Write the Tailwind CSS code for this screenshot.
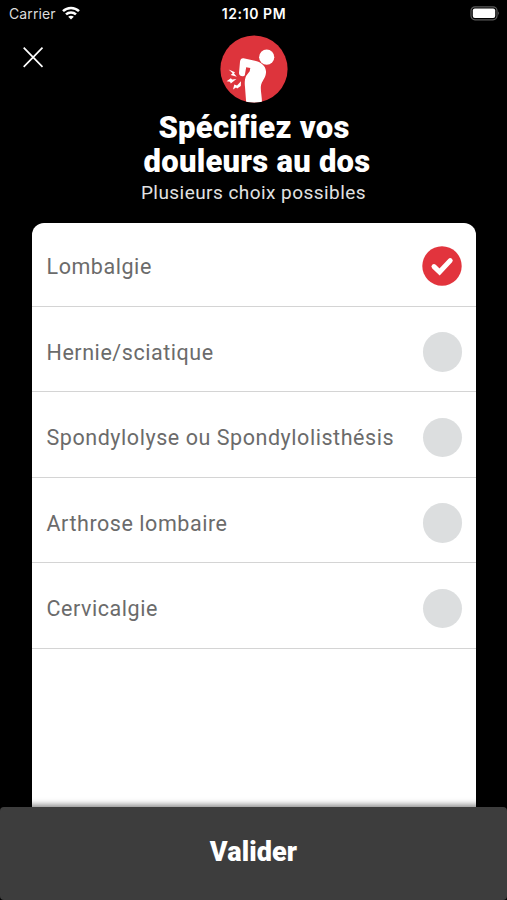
<!DOCTYPE html>
<html lang="fr">
<head>
    <meta charset="UTF-8">
    <meta name="viewport" content="width=device-width, initial-scale=1.0">
    <title>Spécifiez vos douleurs au dos</title>
    <!-- Tailwind CSS -->
    <script src="https://cdn.jsdelivr.net/npm/@tailwindcss/browser@4"></script>
</head>
<body class="bg-black">
    <div class="relative flex flex-col h-[900px] w-[507px] overflow-hidden bg-black text-white font-['Roboto',sans-serif]">
        <!-- Barre d'état -->
        <div class="grid grid-cols-3 items-center h-7 pl-[9px] pr-[7px] shrink-0 font-['Inter',sans-serif] text-[14px] leading-7">
            <div class="flex items-center gap-1.5 text-[#dcdcdc]">
                <span class="tracking-[0.1px]">Carrier</span>
                <svg class="w-[18px] h-[14px] -mt-0.5" viewBox="0 0 18 14" fill="none" stroke="#fff" stroke-width="2.5">
                    <path d="M1 5.2C5.4 .9 12.6 .9 17 5.2"/>
                    <path d="M4 8.4C6.8 5.7 11.2 5.7 14 8.4"/>
                    <path d="M9 13.6L6.2 10.8C7.8 9.3 10.2 9.3 11.8 10.8Z" fill="#fff" stroke="none"/>
                </svg>
            </div>
            <span class="text-center font-semibold tracking-[0.6px] -ml-px">12:10 PM</span>
            <svg class="justify-self-end w-[30px] h-[15px] -mt-0.5" viewBox="0 0 30 15">
                <rect x="1" y=".8" width="26" height="13" rx="4" fill="none" stroke="#5b5b5b" stroke-width="1.2"/>
                <rect x="2.8" y="2.5" width="22.4" height="9.6" rx="2" fill="#fff"/>
                <path d="M28.2 5.2Q30 7.3 28.2 9.4Z" fill="#777"/>
            </svg>
        </div>

        <!-- Bouton fermer -->
        <button class="absolute left-[22px] top-[46px]" aria-label="Fermer">
            <svg class="w-[22px] h-[22px]" viewBox="0 0 22 22" stroke="#fff" stroke-width="1.7">
                <path d="M1.7 1.7L20.5 20.8M20.5 1.7L1.7 20.8"/>
            </svg>
        </button>

        <!-- En-tête -->
        <header class="flex flex-col items-center pt-[7px] h-[195px] shrink-0">
            <svg class="w-[68px] h-[68px] shrink-0" viewBox="0 0 68 68">
                <defs>
                    <clipPath id="disc"><circle cx="34" cy="34" r="33.6"/></clipPath>
                </defs>
                <circle cx="34" cy="34" r="33.6" fill="#dd343c"/>
                <g clip-path="url(#disc)" fill="#fff">
                    <circle cx="46.7" cy="22.2" r="7.6"/>
                    <!-- buste et bras plié -->
                    <path d="M23.5 23.2C21.2 23 20.2 24.5 20 26.8L19 38C19 41.5 23.6 42 24.8 40.2L26.2 32.2L30.3 33L29.7 36.2L26.4 40.4C24.8 43 24.4 48 25 52L26.2 68H42C42 61 40.4 56 40.9 51C41.6 46 46.4 42.4 46 36.3C45.7 30.8 40.8 27.4 36.8 26.2Z"/>
                    <!-- éclairs -->
                    <path d="M8.6 34.4L15 37.2L14 38.6L16.8 41.8L10.7 40L12.6 38.3Z"/>
                    <path d="M6.6 46.3L10.8 43.2L12.2 44.6L16.4 44L10.8 48.4L10 46.7Z"/>
                    <path d="M13 54.6L14.3 49.4L17 50.4L21 46.3L20.8 51L17.2 53.4L16 52.4Z"/>
                </g>
            </svg>
            <h1 class="mt-2 ml-[7px] text-center font-black text-[31px] leading-[34px] tracking-[0.25px]">
                <span class="block -ml-1.5">Spécifiez vos</span>
                <span class="block">douleurs au dos</span>
            </h1>
            <p class="text-[19px] leading-7 tracking-[0.45px] text-[#e2e2e2]">Plusieurs choix possibles</p>
        </header>

        <!-- Liste des choix -->
        <ul class="flex-1 ml-[31.5px] mr-[31px] rounded-t-xl bg-white text-[#6b6b6b] text-[21.5px] leading-7 tracking-[0.55px]">
            <li class="flex items-center justify-between h-[83.6px] pt-[3px] pl-[15px] pr-3.5 border-b border-[#d4d4d4]">
                <span class="pt-[3px]">Lombalgie</span>
                <svg class="w-10 h-10" viewBox="0 0 40 40">
                    <circle cx="20" cy="20" r="19.7" fill="#e2343d"/>
                    <path d="M12 20.6L17.6 26L28.2 14.6" fill="none" stroke="#fff" stroke-width="5" stroke-linecap="round"/>
                </svg>
            </li>
            <li class="flex items-center justify-between h-[85.5px] pt-[6px] pl-[15px] pr-3.5 border-b border-[#d4d4d4]">
                <span class="pt-0.5">Hernie/sciatique</span>
                <i class="w-[39.5px] h-[39.5px] rounded-full bg-[#dcdedf]"></i>
            </li>
            <li class="flex items-center justify-between h-[85.5px] pt-[6px] pl-[15px] pr-3.5 border-b border-[#d4d4d4]">
                <span class="pt-0.5 whitespace-nowrap">Spondylolyse ou Spondylolisthésis</span>
                <i class="w-[39.5px] h-[39.5px] rounded-full bg-[#dcdedf]"></i>
            </li>
            <li class="flex items-center justify-between h-[85.5px] pt-[6px] pl-[15px] pr-3.5 border-b border-[#d4d4d4]">
                <span class="pt-0.5">Arthrose lombaire</span>
                <i class="w-[39.5px] h-[39.5px] rounded-full bg-[#dcdedf]"></i>
            </li>
            <li class="flex items-center justify-between h-[85.5px] pt-[6px] pl-[15px] pr-3.5 border-b border-[#d4d4d4]">
                <span class="pt-0.5">Cervicalgie</span>
                <i class="w-[39.5px] h-[39.5px] rounded-full bg-[#dcdedf]"></i>
            </li>
        </ul>

        <!-- Validation -->
        <footer class="relative shrink-0 h-[93px] rounded-sm bg-[#3d3d3d] shadow-[0_-2px_6px_rgba(0,0,0,0.5)]">
            <button class="w-full h-[90px] font-black text-[27px] leading-8 tracking-[0.1px]">Valider</button>
        </footer>
    </div>
</body>
</html>
